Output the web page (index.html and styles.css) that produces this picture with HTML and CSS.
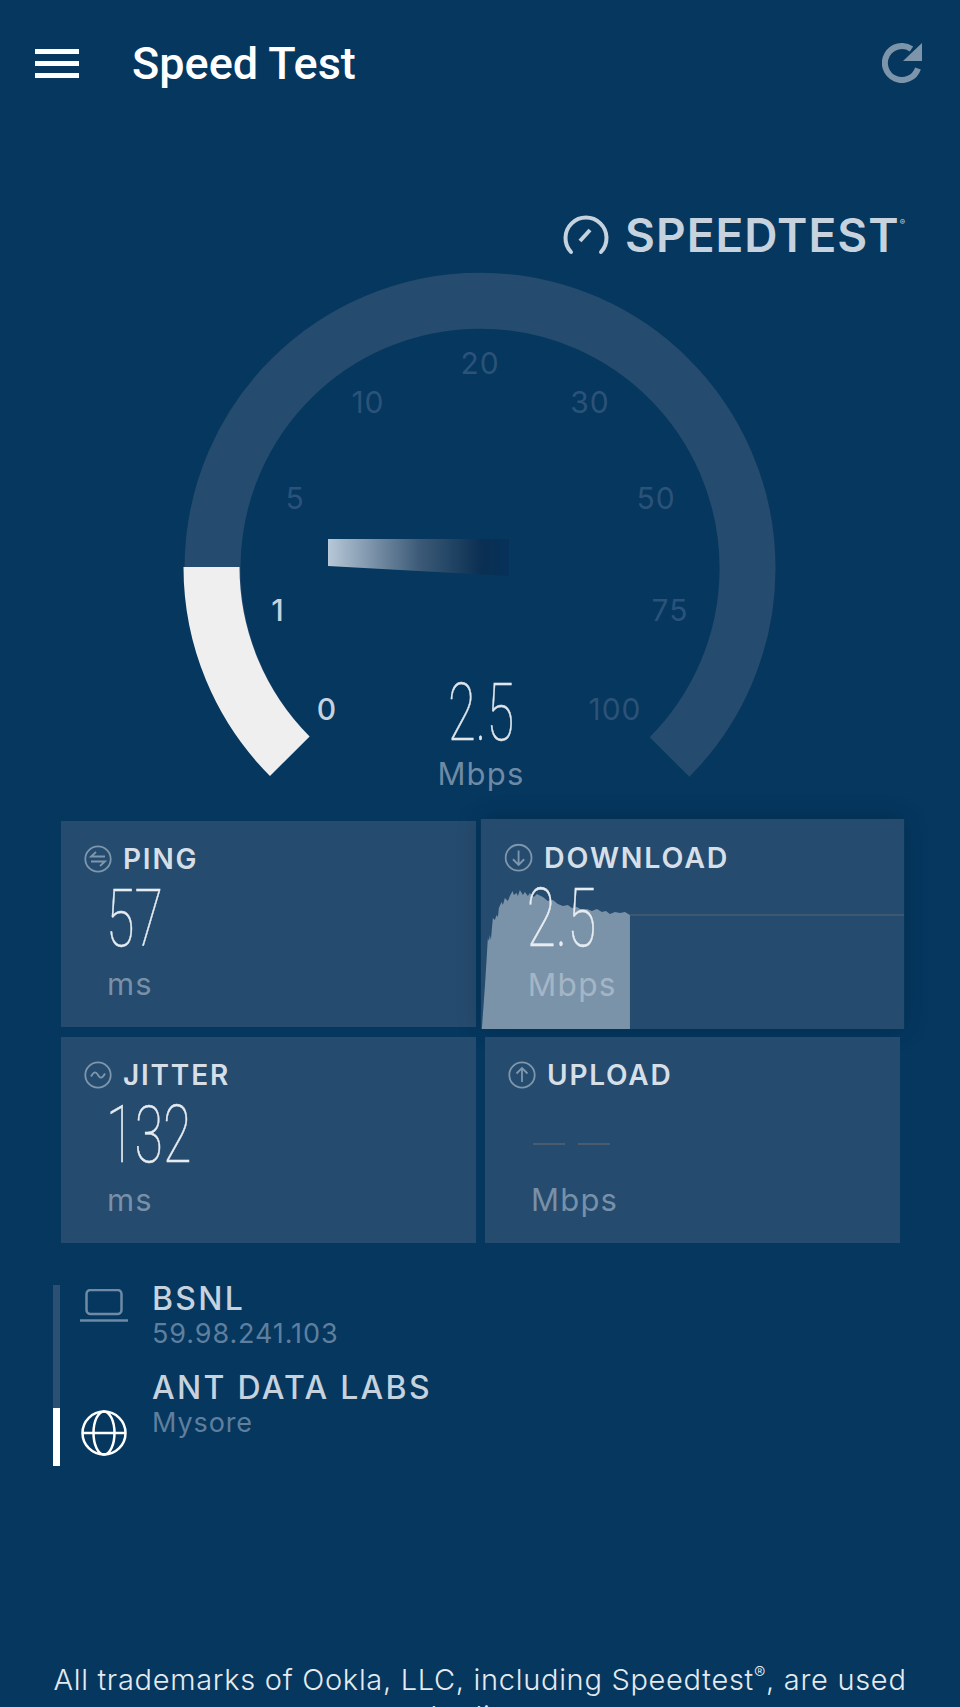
FILE: index.html
```html
<!DOCTYPE html>
<html lang="en">
<head>
  <meta charset="UTF-8">
  <meta name="viewport" content="width=device-width, initial-scale=1.0">
  <title>Speed Test</title>
  <link rel="stylesheet" href="styles.css">
</head>
<body>
  <header class="appbar">
    <div class="menu-icon"><span></span><span></span><span></span></div>
    <h1 class="appbar-title">Speed Test</h1>
    <svg class="refresh-icon" viewBox="0 0 40 40" width="40" height="40">
      <path d="M36 25.500A17 17 0 1 1 29.500 6" fill="none" stroke="#7d95ab" stroke-width="6"/>
      <path d="M40 0V18H21Z" fill="#7d95ab"/>
    </svg>
  </header>

  <div class="brand">
    <svg class="brand-icon" viewBox="0 0 46 40" width="46" height="40">
      <path d="M8 37A20.500 20.500 0 1 1 38 37" fill="none" stroke="#c6d2de" stroke-width="4" stroke-linecap="round"/>
      <path d="M17 26L27 15" fill="none" stroke="#c6d2de" stroke-width="4"/>
    </svg>
    <span class="brand-name">SPEEDTEST</span><span class="brand-mark">®</span>
  </div>

  <!-- 270 degree dial, the labels sit on a free canvas -->
  <svg class="gauge" viewBox="0 265 960 540" width="960" height="540">
    <defs>
      <linearGradient id="needle-fade" x1="0" x2="1" y1="0" y2="0">
        <stop offset="0" stop-color="#b7c8d8"/>
        <stop offset="0.5" stop-color="#3d5b78"/>
        <stop offset="0.85" stop-color="#0a2f52"/>
        <stop offset="1" stop-color="#06315a"/>
      </linearGradient>
    </defs>
    <path d="M289.800 756.200A267.500 267.500 0 1 1 669.500 757" fill="none" stroke="#254b6e" stroke-width="56"/>
    <path d="M211.500 567A267.500 267.500 0 0 0 289.800 756.200" fill="none" stroke="#efeff0" stroke-width="56"/>
    <path d="M328 539H509V576L328 566Z" fill="url(#needle-fade)"/>
    <g class="tick">
      <text x="480" y="374">20</text>
      <text x="368" y="413">10</text>
      <text x="590" y="413">30</text>
      <text x="295" y="509">5</text>
      <text x="656" y="509">50</text>
      <text x="670" y="621">75</text>
      <text x="615" y="720">100</text>
      <text class="tick-on" x="278" y="621">1</text>
      <text class="tick-on" x="327" y="720">0</text>
    </g>
    <text class="gauge-value" transform="translate(481 740) scale(.64 1)">2.5</text>
    <text class="gauge-unit" x="481" y="785">Mbps</text>
  </svg>

  <section class="stats">
    <div class="stat">
      <div class="stat-head">
        <svg class="stat-icon" viewBox="0 0 28 28" width="28" height="28">
          <circle cx="14" cy="14" r="12.700"/>
          <path d="M21 11.500H7L12 7M7 16.500H21L16 21"/>
        </svg>
        <span class="stat-label">PING</span>
      </div>
      <div class="stat-value">57</div>
      <div class="stat-unit">ms</div>
    </div>

    <div class="stat stat-active">
      <svg class="stat-chart" viewBox="481 819 423 210" preserveAspectRatio="none">
        <path class="chart-line" d="M630 915H904"/>
        <path class="chart-fill" d="M482 1029L485 987L486.700 960L488 938L489 941L490 935L491 940L493 918L495 920L496.700 915L498 917L499 908L501.700 902L503 905L505 898L508 901L510 896L512.700 891L514 895L516.700 893L518 896L520 890L523 895L525 892L528 896L530 893L534 897L537 894L543 897L548 901L553 900L558 904L563 906L568 905L572 908L577 907L582 910L587 909L592 911L597 909L602 912L606 911L610 914L615 912L620 913L625 912L630 915V1029Z"/>
      </svg>
      <div class="stat-head">
        <svg class="stat-icon" viewBox="0 0 28 28" width="28" height="28">
          <circle cx="14" cy="14" r="12.700"/>
          <path d="M14 7V21M8.500 15.500L14 21L19.500 15.500"/>
        </svg>
        <span class="stat-label">DOWNLOAD</span>
      </div>
      <div class="stat-value">2.5</div>
      <div class="stat-unit">Mbps</div>
    </div>

    <div class="stat">
      <div class="stat-head">
        <svg class="stat-icon" viewBox="0 0 28 28" width="28" height="28">
          <circle cx="14" cy="14" r="12.700"/>
          <path d="M7 15.500C10 10 12 10.500 14 14S18 18 21 12.500"/>
        </svg>
        <span class="stat-label">JITTER</span>
      </div>
      <div class="stat-value">132</div>
      <div class="stat-unit">ms</div>
    </div>

    <div class="stat">
      <div class="stat-head">
        <svg class="stat-icon" viewBox="0 0 28 28" width="28" height="28">
          <circle cx="14" cy="14" r="12.700"/>
          <path d="M14 21V7M8.500 12.500L14 7L19.500 12.500"/>
        </svg>
        <span class="stat-label">UPLOAD</span>
      </div>
      <div class="stat-value stat-empty"><span></span><span></span></div>
      <div class="stat-unit">Mbps</div>
    </div>
  </section>

  <section class="servers">
    <div class="server-bar"><span></span></div>
    <div class="server-icons">
      <svg viewBox="0 0 48 34" width="48" height="34">
        <rect x="6.500" y="1" width="35" height="24" rx="4" fill="none" stroke="#6f8aa5" stroke-width="2.500"/>
        <path d="M0 31.500H48" stroke="#6f8aa5" stroke-width="2.500"/>
      </svg>
      <svg viewBox="0 0 46 46" width="46" height="46" fill="none" stroke="#fff" stroke-width="2.500">
        <circle cx="23" cy="23" r="21.500"/>
        <ellipse cx="23" cy="23" rx="10.500" ry="21.500"/>
        <path d="M1.500 23H44.500"/>
      </svg>
    </div>
    <div class="server-list">
      <div class="server">
        <div class="server-name">BSNL</div>
        <div class="server-sub">59.98.241.103</div>
      </div>
      <div class="server">
        <div class="server-name">ANT DATA LABS</div>
        <div class="server-sub">Mysore</div>
      </div>
    </div>
  </section>

  <footer class="legal">All trademarks of Ookla, LLC, including Speedtest<sup class="legal-mark">®</sup>, are used under license</footer>
</body>
</html>
```

FILE: styles.css
```css
html, body {
  height: 100%;
}

body {
  margin: 0;
  overflow: hidden;
  background-color: #05375f;
  font-family: 'Inter', sans-serif;
  color: #c6d2de;
}

.appbar {
  display: flex;
  align-items: center;
  height: 126px;
  padding: 0 38px 0 35px;
}

.menu-icon {
  display: flex;
  flex-direction: column;
  gap: 7px;
  width: 44px;
}

.menu-icon span {
  display: block;
  height: 5px;
  background: #fff;
}

.appbar-title {
  flex: 1;
  margin: 0 0 0 53px;
  font-family: 'Roboto', sans-serif;
  font-size: 45px;
  font-weight: 500;
  color: #fff;
}

.brand {
  display: flex;
  justify-content: flex-end;
  align-items: flex-start;
  height: 139px;
  padding: 89px 55px 0 0;
  box-sizing: border-box;
}

.brand-icon {
  margin-right: 16px;
}

.brand-name {
  font-size: 46px;
  font-weight: 600;
  letter-spacing: 1px;
  line-height: 40px;
  height: 40px;
}

.brand-mark {
  font-size: 8px;
  line-height: 14px;
}

.gauge {
  display: block;
}

.tick text {
  font-size: 30px;
  letter-spacing: 1px;
  text-anchor: middle;
  fill: #2b5278;
}

.tick .tick-on {
  fill: #c6d2de;
  font-weight: 500;
}

.gauge-value {
  font-family: 'Roboto', sans-serif;
  font-size: 79px;
  font-weight: 100;
  text-anchor: middle;
  fill: #dfe6ec;
  stroke: #dfe6ec;
  stroke-width: 0.500;
}

.gauge-unit {
  font-size: 31px;
  letter-spacing: 1.200px;
  text-anchor: middle;
  fill: #6f8aa5;
}

.stats {
  display: grid;
  grid-template-columns: 415px 415px;
  grid-auto-rows: 206px;
  gap: 10px 9px;
  margin: 16px 0 0 61px;
}

.stat {
  position: relative;
  background: #254b6e;
  padding: 23px 0 0 23px;
  box-sizing: border-box;
}

.stat-active {
  transform: scale(1.02);
  box-shadow: 0 0 24px rgba(0, 0, 0, 0.18);
}

.stat-chart {
  position: absolute;
  top: 0;
  left: 0;
  width: 100%;
  height: 100%;
}

.chart-line {
  fill: none;
  stroke: #4a5c70;
  stroke-width: 1.500;
}

.chart-fill {
  fill: #7b93a9;
}

.stat-head {
  position: relative;
  display: flex;
  align-items: center;
  height: 30px;
}

.stat-icon {
  margin-right: 11px;
}

.stat-icon circle, .stat-icon path {
  fill: none;
  stroke: #7f97ad;
  stroke-width: 1.800;
}

.stat-label {
  font-size: 28px;
  font-weight: 600;
  letter-spacing: 1.800px;
  color: #d6dfe7;
}

.stat-value {
  position: relative;
  height: 80px;
  margin: 5px 0 0 22px;
  font-family: 'Roboto', sans-serif;
  font-size: 80px;
  font-weight: 100;
  line-height: 80px;
  color: #e6ecf1;
  -webkit-text-stroke: 0.500px #e6ecf1;
  transform: scaleX(.65);
  transform-origin: left;
}

.stat-empty {
  display: flex;
  align-items: center;
  gap: 13px;
  transform: none;
  margin-left: 25px;
  padding-top: 18px;
  box-sizing: border-box;
}

.stat-empty span {
  width: 32px;
  height: 2px;
  background: #4a5c70;
}

.stat-unit {
  position: relative;
  margin: 7px 0 0 23px;
  font-size: 31px;
  letter-spacing: 1.200px;
  line-height: 36px;
  color: #7890a8;
}

.stat-active .stat-unit {
  color: #a4b6c6;
}

.servers {
  display: flex;
  margin: 42px 0 0 53px;
  height: 181px;
}

.server-bar {
  display: flex;
  flex-direction: column;
  justify-content: flex-end;
  width: 7px;
  background: #2b5074;
}

.server-bar span {
  display: block;
  height: 58px;
  background: #fff;
}

.server-icons {
  display: flex;
  flex-direction: column;
  align-items: center;
  gap: 87px;
  width: 48px;
  margin: 4px 0 0 20px;
}

.server-list {
  margin: -4px 0 0 24px;
}

.server {
  margin-bottom: 20px;
}

.server-name {
  font-size: 32px;
  font-weight: 500;
  letter-spacing: 2.300px;
  line-height: 36px;
  color: #c6d2de;
}

.server-sub {
  margin-top: 1px;
  font-size: 27px;
  letter-spacing: 0.900px;
  line-height: 32px;
  color: #5f7f9e;
}

.legal {
  margin: 195px 50px 0;
  font-size: 29px;
  font-weight: 300;
  letter-spacing: 0.700px;
  line-height: 37px;
  text-align: center;
  color: #e4eaef;
}

.legal-mark {
  font-size: 17px;
  line-height: 0;
}
```
